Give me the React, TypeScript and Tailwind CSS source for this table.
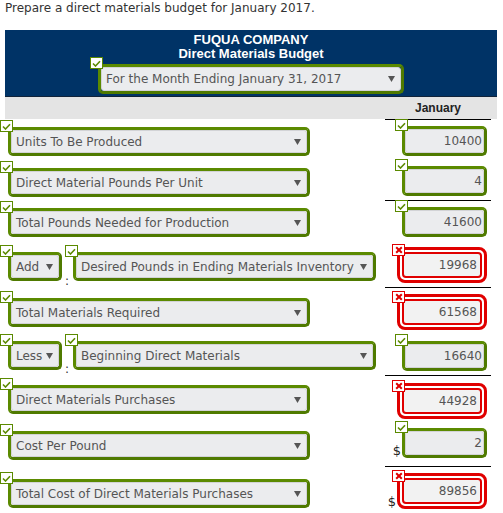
import React from "react"

const GREEN = "#5b8a00"

type Row = {
  h: number
  lt: number
  rt: number
  ok: boolean
  value: string
  label: string
  prefix?: string
  dollar?: boolean
  line?: boolean
}

const rows: Row[] = [
  { h: 41, lt: 8, rt: 7, ok: true, value: "10400", label: "Units To Be Produced", line: true },
  { h: 40, lt: 8, rt: 6, ok: true, value: "4", label: "Direct Material Pounds Per Unit" },
  { h: 42, lt: 8, rt: 7, ok: true, value: "41600", label: "Total Pounds Needed for Production", line: true },
  { h: 45, lt: 10, rt: 5, ok: false, value: "19968", label: "Desired Pounds in Ending Materials Inventory", prefix: "Add" },
  { h: 46, lt: 11, rt: 7, ok: false, value: "61568", label: "Total Materials Required", line: true },
  { h: 42, lt: 8, rt: 8, ok: true, value: "16640", label: "Beginning Direct Materials", prefix: "Less" },
  { h: 44, lt: 10, rt: 8, ok: false, value: "44928", label: "Direct Materials Purchases", line: true },
  { h: 47, lt: 12, rt: 9, ok: true, value: "2", label: "Cost Per Pound", dollar: true },
  { h: 46, lt: 13, rt: 7, ok: false, value: "89856", label: "Total Cost of Direct Materials Purchases", line: true, dollar: true },
]

// little marker box (check or cross) sitting over the top-left corner of a field
const Mark = ({ ok, className }: { ok: boolean; className: string }) => (
  <span
    className={
      "absolute z-10 flex items-center justify-center w-[13px] h-[12px] bg-white border " +
      (ok ? "border-[#5b8a00] " : "border-[#e00000] ") +
      className
    }
  >
    {ok ? (
      <svg width="9" height="7" viewBox="0 0 9 7">
        <path d="M1 3.5 L3.5 6 L8 1.2" fill="none" stroke={GREEN} strokeWidth="1.6" />
      </svg>
    ) : (
      <svg width="8" height="8" viewBox="0 0 8 8">
        <path d="M1.2 1.2 L6.8 6.8 M6.8 1.2 L1.2 6.8" stroke="#e00000" strokeWidth="2" />
      </svg>
    )}
  </span>
)

const Arrow = () => (
  <svg width="7" height="6" viewBox="0 0 7 6" className="shrink-0">
    <path d="M0 0 H7 L3.5 6 Z" fill="#555" />
  </svg>
)

const Select = ({ label, width }: { label: string; width: string }) => (
  <div className={"relative h-[29px] shrink-0 " + width}>
    <Mark ok className="-left-[8px] -top-[7px]" />
    <div className="h-full rounded-[5px] border-[3px] border-[#5b8a00] border-r-[#4f7a00] border-b-[#4f7a00]">
      <div className="flex items-center justify-between h-full pl-[4px] pr-[5px] rounded-[3px] bg-[#ebecee] border border-[#d2d3d6] text-[#555] whitespace-nowrap">
        <span>{label}</span>
        <Arrow />
      </div>
    </div>
  </div>
)

const ValueBox = ({ ok, value }: { ok: boolean; value: string }) =>
  ok ? (
    <div className="relative w-[85px] h-[30px]">
      <Mark ok className="-left-[7px] -top-[7px]" />
      <div className="h-full rounded-[5px] border-[3px] border-[#5b8a00] border-r-[#4f7a00] border-b-[#4f7a00]">
        <div className="flex items-center justify-end h-full pr-[1px] rounded-[3px] bg-[#ebecee] border border-[#d2d3d6] text-[#555]">
          {value}
        </div>
      </div>
    </div>
  ) : (
    <div className="relative w-[90px] h-[36px]">
      <Mark ok={false} className="-left-[5px] -top-[3px]" />
      <div className="h-full p-[2px] rounded-[8px] border-[3px] border-[#e00000] bg-white">
        <div className="flex items-center justify-end h-full pr-[3px] rounded-[4px] border-2 border-[#e00000] bg-[#f2f2f2] text-[#555]">
          {value}
        </div>
      </div>
    </div>
  )

export default function App() {
  return (
    <div className="w-[503px] h-[513px] overflow-hidden bg-white font-['DejaVu_Sans',sans-serif] text-[12px]">
      <p className="pl-[5px] leading-[16px] text-[#333]">
        Prepare a direct materials budget for January 2017.
      </p>

      {/* Header */}
      <div className="ml-[5px] mr-[6px] mt-[14px]">
        <div className="flex flex-col items-center h-[67px] pt-[3px] bg-[#003366] border-b border-[#10233a] text-white font-['Liberation_Sans',sans-serif] font-bold text-[13px] leading-[14px]">
          <div>FUQUA COMPANY</div>
          <div>Direct Materials Budget</div>
          <div className="relative w-[306px] h-[30px] mt-[3px] font-['DejaVu_Sans',sans-serif] font-normal text-[12px]">
            <Mark ok className="-left-[8px] -top-[7px]" />
            <div className="h-full rounded-[5px] border-[3px] border-[#5b8a00] border-r-[#4f7a00] border-b-[#4f7a00]">
              <div className="flex items-center justify-between h-full pl-[4px] pr-[5px] rounded-[3px] bg-[#ebecee] border border-[#d2d3d6] text-[#555]">
                <span>For the Month Ending January 31, 2017</span>
                <Arrow />
              </div>
            </div>
          </div>
        </div>
        <div className="flex h-[22px] bg-[#e4e4e4]">
          <div className="flex-1" />
          <div className="w-[106px] flex items-center justify-center font-['Liberation_Sans',sans-serif] font-bold text-[12px] text-[#222]">
            January
          </div>
          <div className="w-[6px]" />
        </div>
      </div>

      {/* Rows */}
      <div>
        {rows.map((r, i) => (
          <div key={i} className="flex" style={{ height: r.h }}>
            <div className="flex-1 flex items-start pl-[8px]" style={{ paddingTop: r.lt }}>
              {r.prefix ? (
                <>
                  <Select label={r.prefix} width="w-[54px]" />
                  <span className="w-[11px] self-end pl-[3px] leading-[12px] text-[#333]">:</span>
                  <Select label={r.label} width="w-[303px]" />
                </>
              ) : (
                <Select label={r.label} width="w-[302px]" />
              )}
            </div>
            <div
              className={
                "w-[106px] flex items-start justify-end pr-[4px] " +
                (r.line ? "border-t border-black" : "")
              }
              style={{ paddingTop: r.line ? r.rt - 1 : r.rt }}
            >
              <div className="flex items-end">
                {r.dollar && <span className="text-[13px] leading-[14px] text-[#222] pr-[1px]">$</span>}
                <ValueBox ok={r.ok} value={r.value} />
              </div>
            </div>
            <div className="w-[12px]" />
          </div>
        ))}
      </div>
    </div>
  )
}
